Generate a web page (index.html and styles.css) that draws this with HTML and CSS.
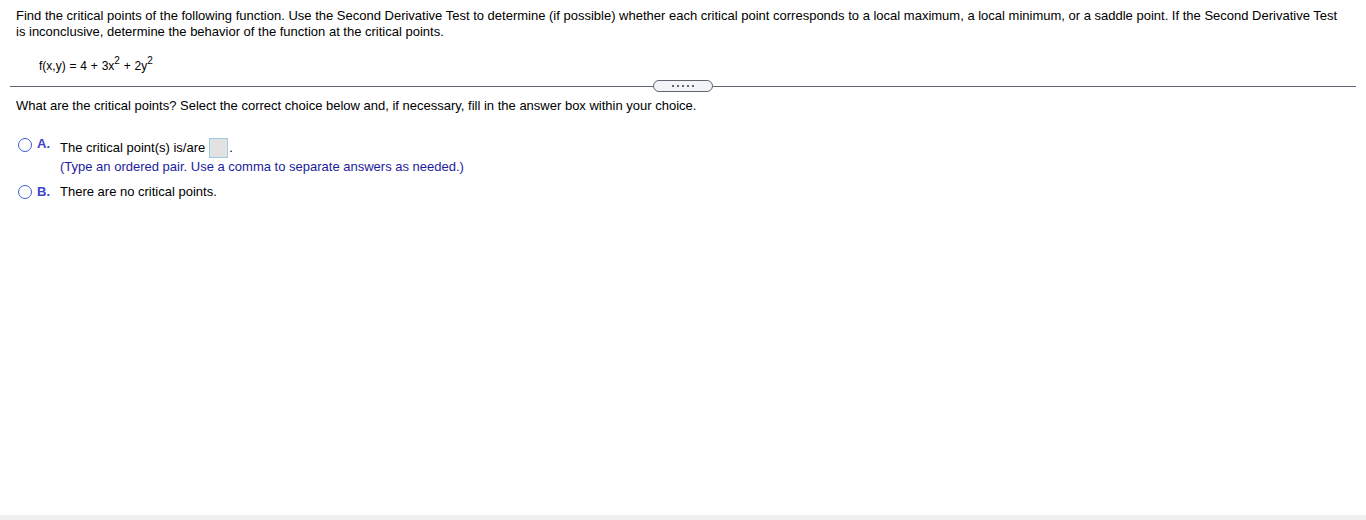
FILE: index.html
```html
<!DOCTYPE html>
<html>
<head>
<meta charset="utf-8">
<link rel="stylesheet" href="styles.css">
</head>
<body>
<div class="page">
  <div class="question">
    <p class="intro">Find the critical points of the following function. Use the Second Derivative Test to determine (if possible) whether each critical point corresponds to a local maximum, a local minimum, or a saddle point. If the Second Derivative Test is inconclusive, determine the behavior of the function at the critical points.</p>
    <p class="formula">f(x,y) = 4 + 3x<sup>2</sup> + 2y<sup>2</sup></p>
  </div>
  <div class="divider">
    <span class="rule"></span>
    <span class="pill"><i class="dot"></i><i class="dot"></i><i class="dot"></i><i class="dot"></i><i class="dot"></i></span>
    <span class="rule"></span>
  </div>
  <div class="answer">
    <p class="prompt">What are the critical points? Select the correct choice below and, if necessary, fill in the answer box within your choice.</p>
    <div class="choice choice-a">
      <span class="radio"></span>
      <span class="label">A.</span>
      <div class="choice-body">
        <div class="choice-text">The critical point(s) is/are <span class="box"></span>.</div>
        <div class="hint">(Type an ordered pair. Use a comma to separate answers as needed.)</div>
      </div>
    </div>
    <div class="choice choice-b">
      <span class="radio"></span>
      <span class="label">B.</span>
      <div class="choice-body">
        <div class="choice-text">There are no critical points.</div>
      </div>
    </div>
  </div>
</div>
<div class="footer"></div>
</body>
</html>
```
FILE: styles.css
```css
html, body {
  margin: 0;
  padding: 0;
  background: #ffffff;
}
body {
  font-family: "Liberation Sans", Arial, sans-serif;
  font-size: 13px;
  color: #000;
  height: 520px;
  display: flex;
  flex-direction: column;
}
.page {
  flex: 1;
}
.question {
  padding: 8px 16px 0 16px;
}
.intro {
  margin: 0;
  line-height: 16px;
}
.formula {
  margin: 18px 0 0 23px;
  font-size: 12px;
  line-height: 16px;
  word-spacing: 0.5px;
}
.formula sup {
  font-size: 10px;
  line-height: 0;
  vertical-align: 6px;
}
.divider {
  display: flex;
  align-items: center;
  padding: 0 10px;
  margin-top: 6px;
  height: 12px;
}
.rule {
  flex: 1;
  height: 1px;
  background: #5e6671;
}
.pill {
  width: 58px;
  height: 10px;
  border: 1px solid #5e6671;
  border-radius: 6px;
  background: #f3f4f8;
  display: flex;
  align-items: center;
  justify-content: center;
  gap: 3px;
}
.dot {
  display: block;
  width: 2px;
  height: 2px;
  background: #5e6671;
}
.answer {
  padding: 0 16px;
}
.prompt {
  margin: 6px 0 0 0;
  line-height: 16px;
}
.choice {
  display: flex;
  align-items: flex-start;
  padding-left: 2px;
}
.choice-a {
  margin-top: 24px;
}
.choice-b {
  margin-top: 10px;
}
.radio {
  width: 12px;
  height: 12px;
  border: 1.3px solid #3a5fd0;
  border-radius: 50%;
  margin-top: 0;
  flex: none;
}
.label {
  color: #3a46c8;
  font-weight: bold;
  font-size: 13px;
  line-height: 14px;
  margin-left: 5px;
  width: 23px;
  flex: none;
}
.choice-a .label {
  line-height: 12px;
}
.choice-body {
  display: flex;
  flex-direction: column;
}
.choice-text {
  line-height: 14px;
  display: flex;
  align-items: center;
}
.choice-a .choice-text {
  margin-top: 0;
  line-height: 20px;
}
.box {
  display: inline-block;
  width: 17px;
  height: 18px;
  background: #e2e2e2;
  border: 1px solid #9ccde0;
  margin-left: 4px;
  margin-right: 1px;
}
.hint {
  color: #1c1c9c;
  line-height: 16px;
  margin-top: 1px;
}
.footer {
  height: 5px;
  background: #f0f0f0;
  flex: none;
}
```
